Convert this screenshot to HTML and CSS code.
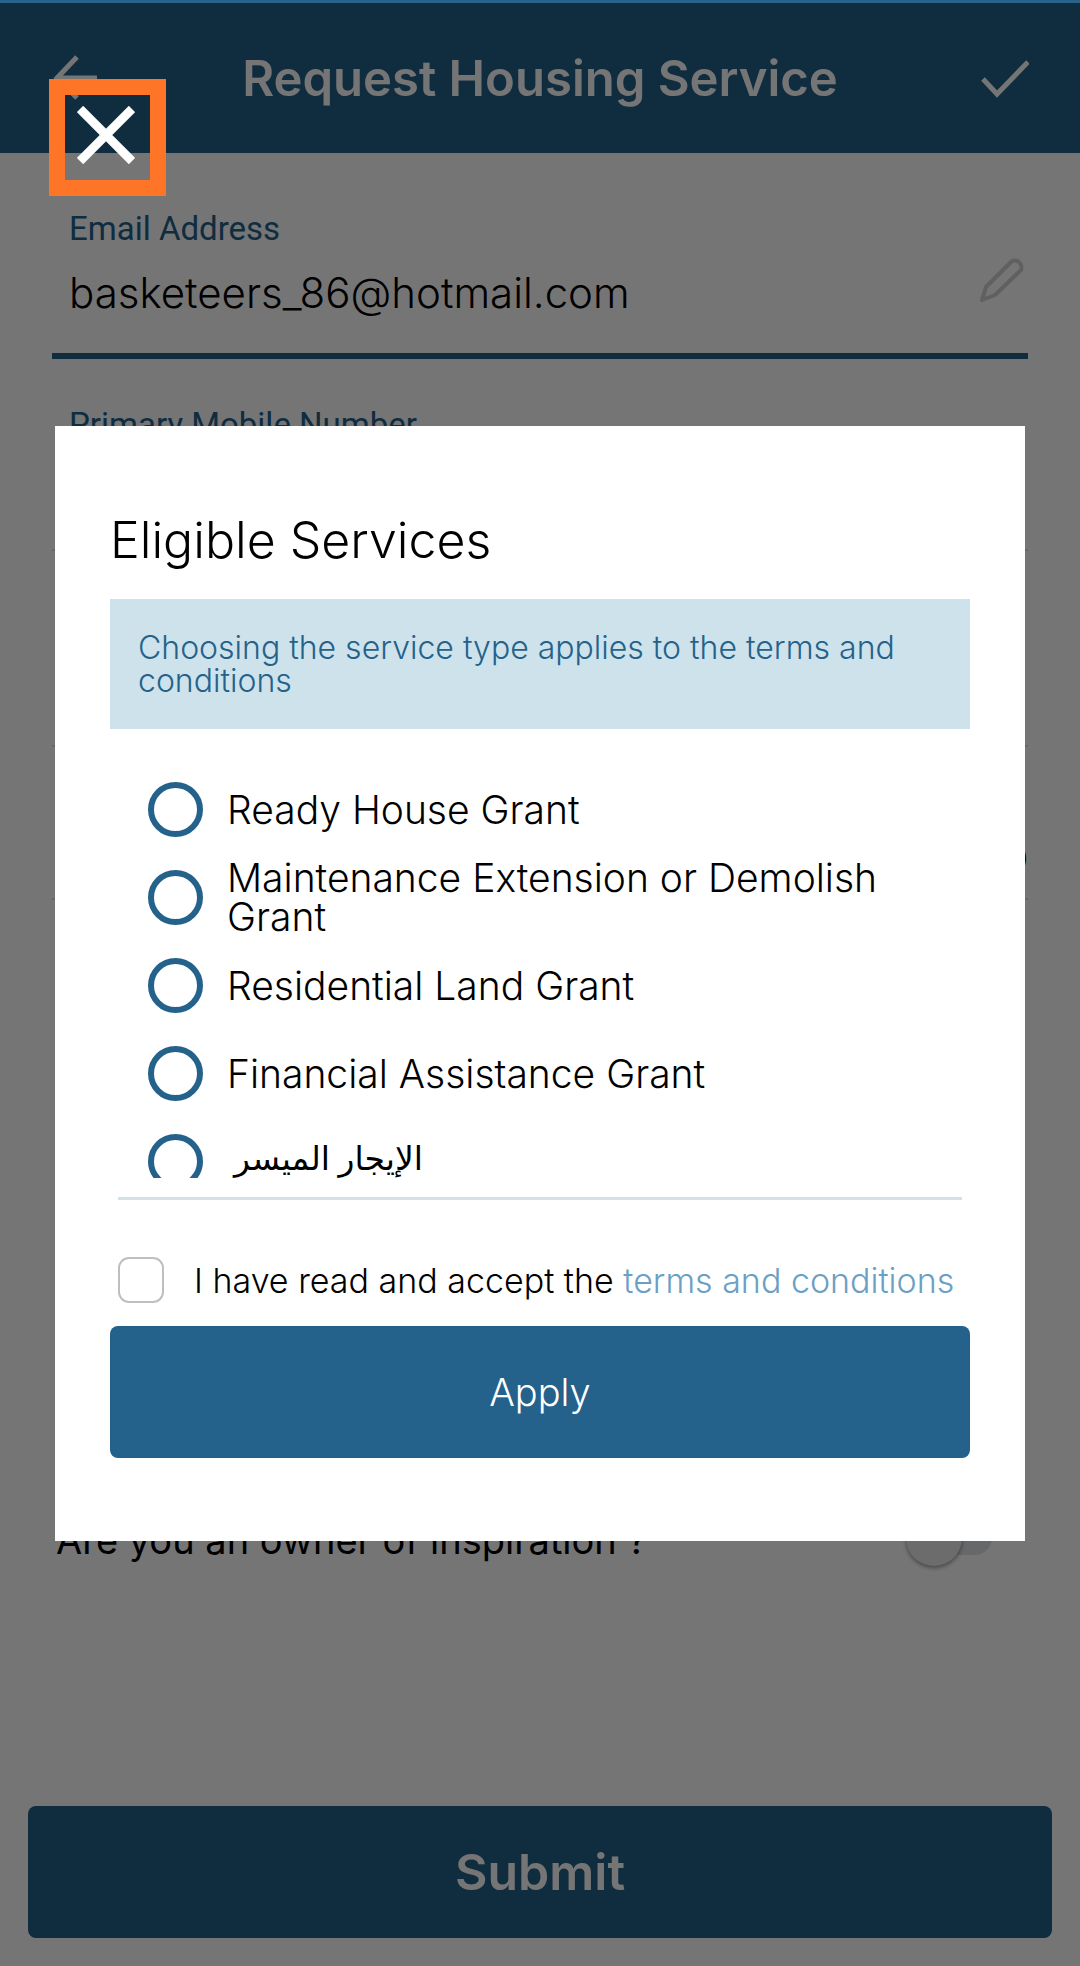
FILE: index.html
```html
<!DOCTYPE html>
<html lang="en">
<head>
<meta charset="utf-8">
<meta name="viewport" content="width=device-width, initial-scale=1">
<title>Request Housing Service</title>
<link rel="stylesheet" href="styles.css">
</head>
<body>
<div class="status-strip"></div>
<main class="app">
  <header class="app-bar">
    <button class="icon-button" type="button" aria-label="Back">
      <svg width="48" height="48" viewBox="0 0 48 48" fill="none" stroke="#fff" stroke-width="5"><path d="M26 2 6 23l20 20M5 23h41"/></svg>
    </button>
    <h1 class="app-title">Request Housing Service</h1>
    <button class="icon-button" type="button" aria-label="Confirm">
      <svg width="48" height="40" viewBox="0 0 48 40" fill="none" stroke="#fff" stroke-width="5"><path d="M2 20 16 35 47 3"/></svg>
    </button>
  </header>

  <form class="form">
    <div class="field field-active">
      <div class="field-body">
        <label class="field-label" for="email">Email Address</label>
        <input class="field-input" id="email" type="email" value="basketeers_86@hotmail.com">
      </div>
      <svg class="pencil" width="46" height="47" viewBox="0 0 46 47" fill="none" stroke="#d1d1d1" stroke-width="4" stroke-linejoin="round"><path d="M3 44 7 31 33 5a7 7 0 0 1 9 9L16 39Z"/></svg>
    </div>
    <div class="field">
      <div class="field-body">
        <label class="field-label" for="mobile">Primary Mobile Number</label>
        <input class="field-input" id="mobile" type="tel">
      </div>
    </div>
    <div class="field">
      <div class="field-body">
        <label class="field-label" for="phone">Phone</label>
        <input class="field-input" id="phone" type="tel">
      </div>
    </div>
    <div class="field-row"><span>BD</span></div>
    <div class="question">
      <label class="question-text" for="owner">Are you an owner of inspiration ?</label>
      <input class="switch" id="owner" type="checkbox" role="switch">
    </div>
  </form>

  <footer class="app-footer">
    <button class="submit" type="button">Submit</button>
  </footer>
</main>

<div class="overlay">
  <button class="close" type="button" aria-label="Close">
    <svg width="58" height="58" viewBox="0 0 58 58" stroke="#fff" stroke-width="9"><path d="M3 3 55 55M55 3 3 55"/></svg>
  </button>
  <section class="dialog" role="dialog" aria-modal="true" aria-labelledby="dialog-title">
    <h2 class="dialog-title" id="dialog-title">Eligible Services</h2>
    <p class="notice">Choosing the service type applies to the terms and conditions</p>
    <div class="options">
      <label class="option"><input class="radio" type="radio" name="service"><span>Ready House Grant</span></label>
      <label class="option"><input class="radio" type="radio" name="service"><span>Maintenance Extension or Demolish Grant</span></label>
      <label class="option"><input class="radio" type="radio" name="service"><span>Residential Land Grant</span></label>
      <label class="option"><input class="radio" type="radio" name="service"><span>Financial Assistance Grant</span></label>
      <label class="option"><input class="radio" type="radio" name="service"><span class="arabic" lang="ar" dir="rtl">الإيجار الميسر</span></label>
    </div>
    <hr class="divider">
    <div class="terms">
      <input class="tick" id="accept" type="checkbox">
      <label for="accept">I have read and accept the <a class="link" href="#terms">terms and conditions</a></label>
    </div>
    <button class="apply" type="button">Apply</button>
  </section>
</div>
</body>
</html>
```
FILE: styles.css
```css
* { box-sizing: border-box; }

body {
  margin: 0;
  background: #fff;
  color: #000;
  font-family: Inter, Roboto, sans-serif;
  font-weight: 300;
}

button, input { font: inherit; color: inherit; }
button { border: 0; padding: 0; background: none; }

.status-strip {
  position: fixed;
  inset: 0 0 auto;
  z-index: 3;
  height: 3px;
  background: #2a628b;
}

.app {
  display: flex;
  flex-direction: column;
  min-height: 100vh;
}

.app-bar {
  display: flex;
  align-items: center;
  justify-content: space-between;
  height: 153px;
  padding: 4px 51px 0;
  background: #24628b;
  color: #fff;
}
.icon-button { display: flex; }
.app-title { margin: 0; font-size: 49px; line-height: 60px; font-weight: 600; }

.form {
  display: flex;
  flex: 1;
  flex-direction: column;
  padding: 56px 52px 0;
}
.field {
  display: flex;
  align-items: flex-end;
  margin-bottom: 50px;
  border-bottom: 2px solid #e0e0e0;
  padding: 0 3px 36px 17px;
}
.field-active { margin-bottom: 46px; border-bottom: 6px solid #24628b; }
.field-body { display: flex; flex: 1; flex-direction: column; gap: 20px; }
.field-label {
  color: #24628b;
  font-family: Roboto, sans-serif;
  font-weight: 400;
  font-size: 33px;
  line-height: 40px;
}
.field-input {
  width: 100%;
  height: 48px;
  border: 0;
  padding: 0;
  background: none;
  font-size: 42px;
  line-height: 48px;
}
.pencil { margin-bottom: 14px; }
.field-row {
  display: flex;
  justify-content: flex-end;
  padding: 38px 0 15px;
  border-bottom: 2px solid #e0e0e0;
  font-size: 42px;
  font-weight: 600;
  line-height: 48px;
}
.question {
  display: flex;
  align-items: center;
  justify-content: space-between;
  margin: auto 36px 238px 4px;
  font-size: 38px;
  font-weight: 400;
  line-height: 56px;
}
.question-text { padding-top: 4px; }
.switch {
  appearance: none;
  display: flex;
  align-items: center;
  width: 86px;
  height: 34px;
  margin: 0;
  border-radius: 17px;
  background: #dfe3e8;
}
.switch::before {
  content: "";
  width: 56px;
  height: 56px;
  border-radius: 50%;
  background: #ececec;
  box-shadow: 0 2px 4px #0006;
}

.app-footer { padding: 0 28px 28px; }
.submit {
  width: 100%;
  height: 132px;
  border-radius: 8px;
  background: #24628b;
  color: #fff;
  font-size: 50px;
  font-weight: 600;
}

.overlay {
  position: fixed;
  inset: 0;
  z-index: 2;
  display: flex;
  flex-direction: column;
  justify-content: center;
  padding: 1px 55px 0;
  background: rgba(0, 0, 0, .54);
}
.close {
  position: absolute;
  top: 79px;
  left: 49px;
  display: flex;
  width: 117px;
  height: 117px;
  padding: 11px 12px;
  border: 16px solid #ff7527;
}
.dialog {
  display: flex;
  flex-direction: column;
  padding: 84px 55px 83px;
  background: #fff;
}
.dialog-title { margin: 0 0 29px; font-size: 50px; line-height: 60px; font-weight: 300; }
.notice {
  margin: 0;
  padding: 32px 28px;
  background: #cee2ec;
  color: #24628b;
  font-size: 32px;
  line-height: 33px;
}
.options {
  height: 413px;
  margin-top: 36px;
  padding: 0 38px;
  overflow-y: auto;
  scrollbar-width: none;
}
.option {
  display: flex;
  align-items: center;
  gap: 24px;
  height: 88px;
  font-size: 39px;
  line-height: 39px;
}
.radio {
  appearance: none;
  flex: none;
  width: 55px;
  height: 55px;
  margin: 0;
  border: 6px solid #24628b;
  border-radius: 50%;
}
.arabic {
  padding: 0 7px 8px;
  font-family: "Noto Sans", "DejaVu Sans", sans-serif;
  font-size: 33px;
  font-weight: 400;
}
.divider {
  width: calc(100% - 16px);
  height: 3px;
  margin: 19px 8px 57px;
  border: 0;
  background: #d5e1e8;
}
.terms {
  display: flex;
  align-items: center;
  gap: 30px;
  height: 46px;
  padding-left: 8px;
  font-size: 34px;
}
.tick {
  appearance: none;
  flex: none;
  width: 46px;
  height: 46px;
  margin: 0;
  border: 2px solid #bfbfbf;
  border-radius: 11px;
}
.link { color: #6ba0c4; text-decoration: none; }
.apply {
  height: 132px;
  margin-top: 23px;
  border-radius: 8px;
  background: #24628b;
  color: #fff;
  font-size: 38px;
}
```
